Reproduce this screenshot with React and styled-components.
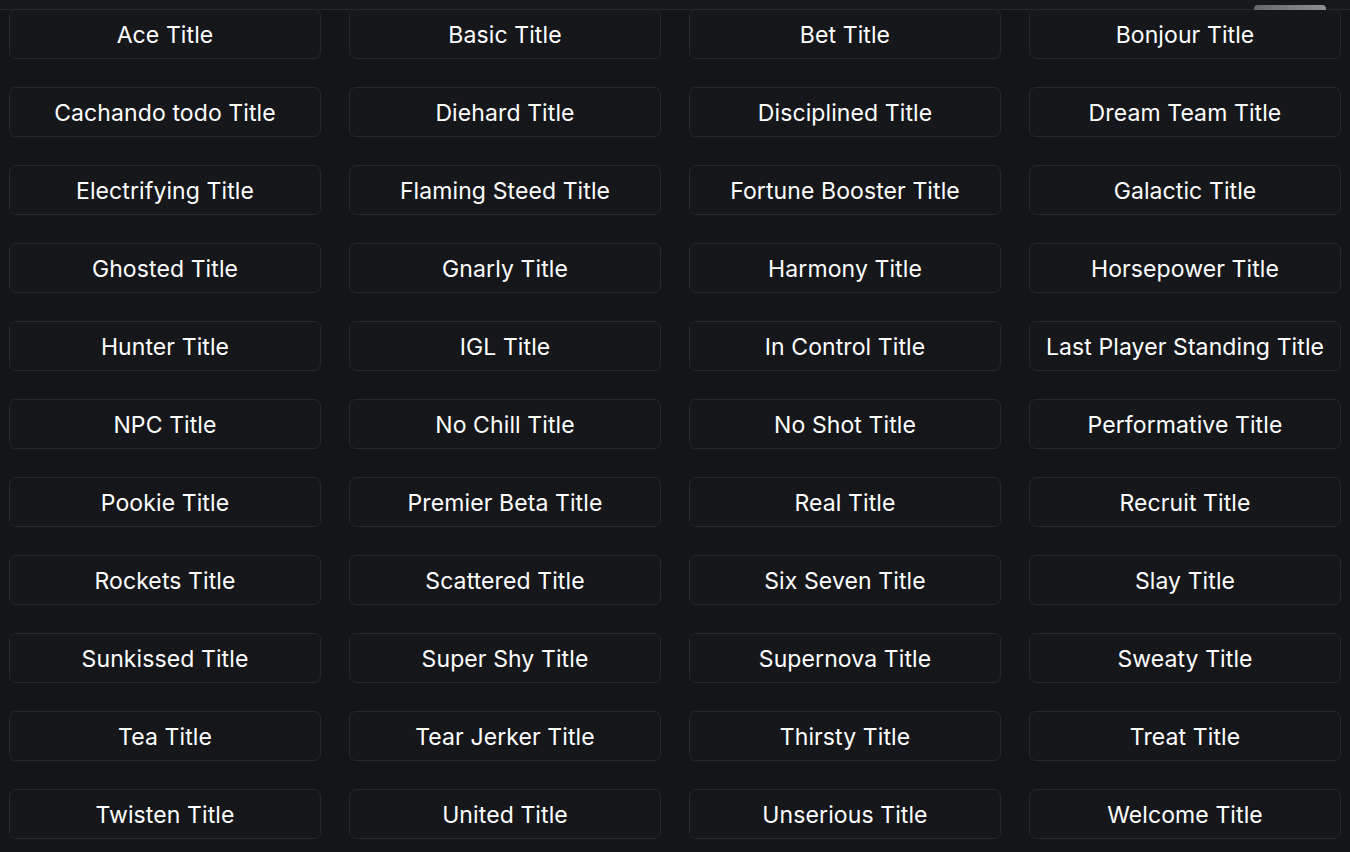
import React from "react";
import styled, { createGlobalStyle } from "styled-components";

const Global = createGlobalStyle`
  html, body { margin: 0; padding: 0; background: #131519; }
  body { font-family: "Inter", "Noto Sans", sans-serif; overflow: hidden; }
`;

const Page = styled.div`
  position: relative;
  width: 1350px;
  height: 852px;
  background: #131519;
  overflow: hidden;
`;

const TopBar = styled.div`
  position: absolute;
  top: 0;
  left: 0;
  right: 0;
  height: 9px;
  background: #16181c;
  border-bottom: 1px solid #24272c;
  z-index: 2;
`;

const Thumb = styled.div`
  position: absolute;
  top: 5px;
  left: 1254px;
  width: 72px;
  height: 5px;
  border-radius: 4px 4px 0 0;
  background: linear-gradient(90deg, #66676d, #8e8f94);
  z-index: 3;
`;

const Grid = styled.div`
  display: grid;
  grid-template-columns: repeat(4, 312px);
  column-gap: 28px;
  row-gap: 28px;
  padding: 9px 9px 0 9px;
`;

const Cell = styled.button`
  height: 50px;
  box-sizing: border-box;
  border: 1px solid #25282d;
  border-radius: 7px;
  background: #15171b;
  color: #ffffff;
  font-family: "Inter", "Noto Sans", sans-serif;
  font-size: 23px;
  font-weight: 400;
  letter-spacing: 0.1px;
  display: flex;
  align-items: center;
  justify-content: center;
  padding: 2px 0 0 0;
  white-space: nowrap;
`;

const titles = [
  "Ace", "Basic", "Bet", "Bonjour",
  "Cachando todo", "Diehard", "Disciplined", "Dream Team",
  "Electrifying", "Flaming Steed", "Fortune Booster", "Galactic",
  "Ghosted", "Gnarly", "Harmony", "Horsepower",
  "Hunter", "IGL", "In Control", "Last Player Standing",
  "NPC", "No Chill", "No Shot", "Performative",
  "Pookie", "Premier Beta", "Real", "Recruit",
  "Rockets", "Scattered", "Six Seven", "Slay",
  "Sunkissed", "Super Shy", "Supernova", "Sweaty",
  "Tea", "Tear Jerker", "Thirsty", "Treat",
  "Twisten", "United", "Unserious", "Welcome",
];

export default function App() {
  return (
    <Page>
      <Global />
      <TopBar />
      <Thumb />
      <Grid>
        {titles.map((t) => (
          <Cell key={t}>{t} Title</Cell>
        ))}
      </Grid>
    </Page>
  );
}
